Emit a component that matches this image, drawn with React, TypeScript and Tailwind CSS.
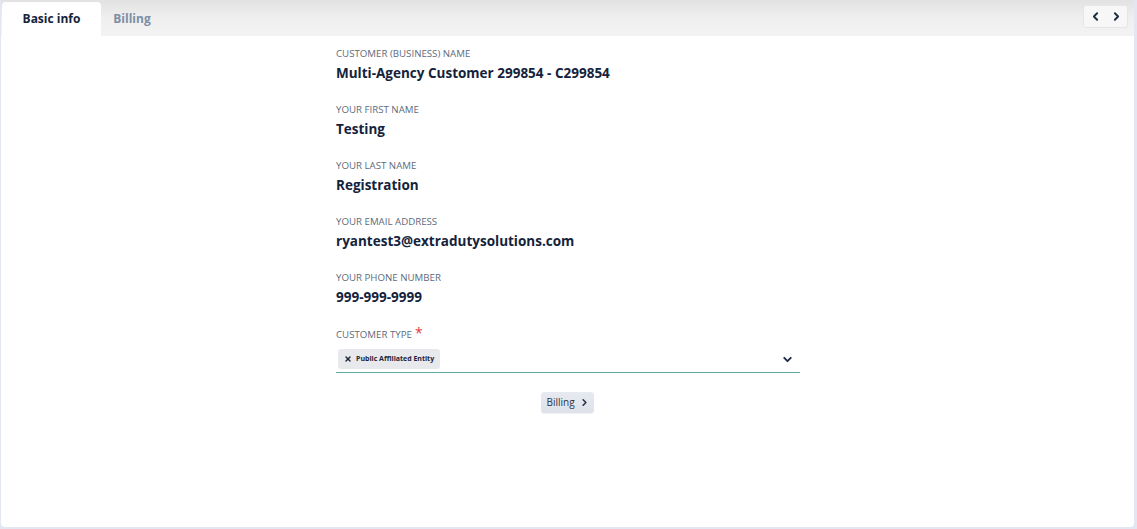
import { FiChevronLeft, FiChevronRight, FiChevronDown, FiX } from "react-icons/fi";

// Fields shown on the basic info tab
const fields = [
  { label: "Customer (Business) Name", value: "Multi-Agency Customer 299854 - C299854" },
  { label: "Your First Name", value: "Testing" },
  { label: "Your Last Name", value: "Registration" },
  { label: "Your Email Address", value: "ryantest3@extradutysolutions.com" },
  { label: "Your Phone Number", value: "999-999-9999" },
];

export default function App() {
  return (
    <div
      className="h-[529px] w-[1137px] bg-[#e3e7f1] pl-px pr-[3px] pb-[2px]"
      style={{ fontFamily: '"Open Sans", "Noto Sans", sans-serif' }}
    >
      <div className="flex h-full flex-col overflow-hidden rounded-b-[4px] bg-white">
        {/* Tabs */}
        <div className="flex h-[36px] items-end justify-between bg-gradient-to-b from-[#e2e2e2] via-[#efefef] to-[#f3f3f3] pl-px">
          <div className="flex h-full items-end">
            <div className="flex h-[34px] w-[99px] items-center justify-center rounded-t-[4px] bg-white text-[12px] font-bold text-[#13233a]">
              Basic info
            </div>
            <div className="flex h-[34px] w-[62px] items-center justify-center text-[12px] font-bold text-[#7d8ea5]">
              Billing
            </div>
          </div>
          <div className="mb-[8px] mr-[6px] flex h-[23px] w-[45px] items-center justify-center gap-[8px] rounded-[3px] border border-[#e6e6e6] bg-[#f7f7f7] text-[#1d2c44]">
            <FiChevronLeft size={13} strokeWidth={3.5} />
            <FiChevronRight size={13} strokeWidth={3.5} />
          </div>
        </div>

        {/* Form */}
        <div className="flex flex-col items-center pt-[10px]">
          <div className="w-[465px] pl-[1px]">
            {fields.map((field, i) => (
              <div key={i} className="h-[56px]">
                <div className="text-[9.7px] uppercase leading-[16px] text-[#5d6a7b]">{field.label}</div>
                <div className="mt-[1px] text-[13.5px] font-bold leading-[20px] text-[#14233b]">{field.value}</div>
              </div>
            ))}

            {/* Customer type select */}
            <div className="pt-[1px]">
              <div className="flex text-[9.7px] uppercase leading-[16px] text-[#5d6a7b]">
                Customer Type
                <span className="ml-[3px] text-[14px] leading-[12px] text-[#e23b3b]">*</span>
              </div>
              <div className="mt-[5px] flex h-[25px] items-center justify-between border-b-[1.5px] border-[#5eaaa2] pb-[2px]">
                <div className="ml-[2px] flex h-[20px] items-center gap-[4px] rounded-[3px] bg-[#e7e9ec] px-[6px] text-[7px] font-bold text-[#1c2638]">
                  <FiX size={8} strokeWidth={4} />
                  Public Affiliated Entity
                </div>
                <FiChevronDown className="mr-[6px] text-[#1d2c44]" size={13} strokeWidth={3.5} />
              </div>
            </div>
          </div>

          <button className="mt-[19px] flex h-[21px] items-center gap-[4px] rounded-[3px] bg-gradient-to-b from-[#e7eaf0] to-[#dde2ea] pl-[5px] pr-[4px] text-[10px] text-[#2a3446] shadow-[0_1px_1px_rgba(0,0,0,0.06)]">
            Billing
            <FiChevronRight size={11} strokeWidth={3.5} />
          </button>
        </div>
      </div>
    </div>
  );
}
